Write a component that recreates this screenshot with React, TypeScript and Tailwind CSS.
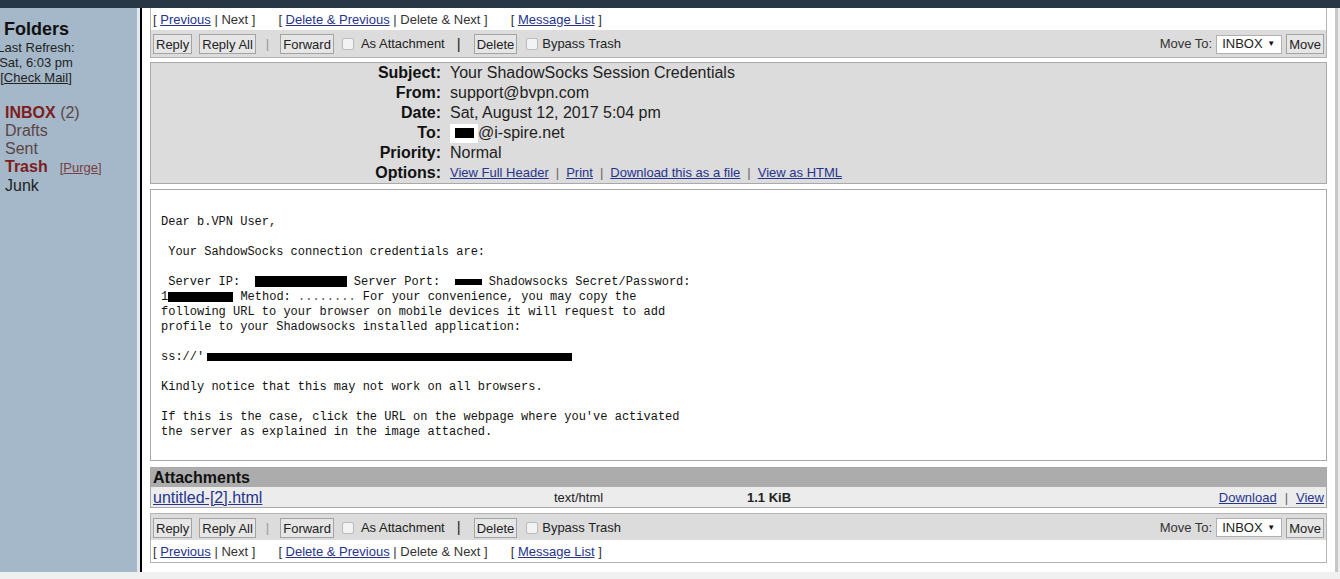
import React from 'react';

const link = 'text-[#26348c] underline';

const Btn: React.FC<{ children: React.ReactNode; className?: string }> = ({ children, className = '' }) => (
  <span
    className={`inline-flex items-center h-[20px] pt-[1px] px-[2px] border border-[#a3a3a3] bg-[#e6e6e6] leading-none text-[13px] text-[#222] ${className}`}
  >
    {children}
  </span>
);

const Check: React.FC<{ className?: string }> = ({ className = '' }) => (
  <span className={`inline-block w-[12px] h-[12px] border border-[#bababa] bg-[#f3f3f3] rounded-[2px] ${className}`} />
);

const NavRow: React.FC<{ className?: string }> = ({ className = '' }) => (
  <div className={`flex items-center gap-[23px] pl-[2px] pt-[1px] text-[13px] text-[#333] ${className}`}>
    <span>
      [ <span className={link}>Previous</span> | Next ]
    </span>
    <span>
      [ <span className={link}>Delete &amp; Previous</span> | Delete &amp; Next ]
    </span>
    <span>
      [ <span className={link}>Message List</span> ]
    </span>
  </div>
);

const Toolbar: React.FC<{ className?: string }> = ({ className = '' }) => (
  <div className={`flex items-center bg-[#dcdcdc] px-[2px] pt-[1px] text-[13px] text-[#222] ${className}`}>
    <Btn>Reply</Btn>
    <Btn className="ml-[7px]">Reply All</Btn>
    <span className="ml-[10px] text-[#9a9a9a]">|</span>
    <Btn className="ml-[11px]">Forward</Btn>
    <Check className="ml-[8px]" />
    <span className="ml-[7px]">As Attachment</span>
    <span className="ml-[12px] text-[15px] text-[#222]">|</span>
    <Btn className="ml-[13px]">Delete</Btn>
    <Check className="ml-[9px]" />
    <span className="ml-[4px]">Bypass Trash</span>
    <div className="ml-auto flex items-center">
      <span className="text-[#333]">Move To:</span>
      <div className="ml-[4px] w-[66px] h-[19px] bg-white border border-[#b0b0b0] flex items-center justify-between pl-[5px] pr-[6px]">
        <span className="text-[13px] text-[#222]">INBOX</span>
        <span className="text-[8px] text-[#111]">▼</span>
      </div>
      <Btn className="ml-[4px]">Move</Btn>
    </div>
  </div>
);

const headers: [string, React.ReactNode][] = [
  ['Subject:', 'Your ShadowSocks Session Credentials'],
  ['From:', 'support@bvpn.com'],
  ['Date:', 'Sat, August 12, 2017 5:04 pm'],
  [
    'To:',
    <span className="flex items-center">
      <span className="flex items-center justify-center w-[28px] h-[19px] bg-white">
        <span className="w-[19px] h-[10px] bg-black" />
      </span>
      <span>@i-spire.net</span>
    </span>,
  ],
  ['Priority:', 'Normal'],
  [
    'Options:',
    <span className="text-[13px]">
      <span className={link}>View Full Header</span>
      <span className="mx-[7px] text-[#666]">|</span>
      <span className={link}>Print</span>
      <span className="mx-[7px] text-[#666]">|</span>
      <span className={link}>Download this as a file</span>
      <span className="mx-[7px] text-[#666]">|</span>
      <span className={link}>View as HTML</span>
    </span>,
  ],
];

const Redact: React.FC<{ w: string; h: string }> = ({ w, h }) => (
  <span className={`inline-block bg-black align-middle ${w} ${h}`} />
);

export default function App() {
  return (
    <div className="w-[1340px] h-[579px] overflow-hidden flex flex-col bg-white font-['Liberation_Sans',Arial,sans-serif]">
      <div className="h-[8px] shrink-0 bg-[#283746]" />

      <div className="flex flex-1 min-h-0">
        {/* folder list */}
        <aside className="w-[137px] shrink-0 bg-[#a4b8c9] pt-[10px] text-[#222]">
          <div className="pl-[4px] text-[18px] font-bold leading-[22px] text-[#111]">Folders</div>
          <div className="w-[72px] flex flex-col items-center text-[13px] leading-[15px] whitespace-nowrap">
            <span>Last Refresh:</span>
            <span>Sat, 6:03 pm</span>
            <span>
              [<span className="underline">Check Mail</span>]
            </span>
          </div>
          <div className="mt-[19px] pl-[5px] text-[16px] leading-[18px]">
            <div>
              <span className="font-bold text-[#7d1d1d]">INBOX</span>{' '}
              <span className="text-[#5c4444]">(2)</span>
            </div>
            <div className="text-[#5c4444]">Drafts</div>
            <div className="text-[#5c4444]">Sent</div>
            <div className="flex items-baseline">
              <span className="font-bold text-[#7d1d1d]">Trash</span>
              <span className="ml-[12px] text-[13px] text-[#7a4040]">
                [<span className="underline">Purge</span>]
              </span>
            </div>
            <div className="text-[#222]">Junk</div>
          </div>
        </aside>
        <div className="w-[3px] shrink-0 bg-[#e3e8ec]" />
        <div className="w-[2px] shrink-0 bg-black" />

        <main className="flex-1 flex flex-col px-[8px]">
          {/* top navigation */}
          <div className="border-x border-b border-[#b4b4b4]">
            <NavRow className="h-[22px]" />
            <Toolbar className="h-[27px]" />
          </div>

          {/* message headers */}
          <div className="mt-[4px] border border-[#a9a9a9] bg-[#dcdcdc] grid grid-cols-[293px_1fr] text-[16px] leading-[20px] text-[#222]">
            {headers.map(([label, value]) => (
              <React.Fragment key={label}>
                <div className="h-[20px] text-right pr-[3px] font-bold text-[#111]">{label}</div>
                <div className="h-[20px] pl-[6px] flex items-center">{value}</div>
              </React.Fragment>
            ))}
          </div>

          {/* message body */}
          <div className="mt-[5px] h-[272px] border border-[#a9a9a9] bg-white pt-[10px] pl-[10px]">
            <pre className="font-['Liberation_Mono','DejaVu_Sans_Mono',monospace] text-[12px] leading-[15px] text-[#111]">
              {'\n'}
              {'Dear b.VPN User,\n'}
              {'\n'}
              {' Your SahdowSocks connection credentials are:\n'}
              {'\n'}
              {' Server IP:  '}
              <Redact w="w-[92px]" h="h-[11px]" />
              {' Server Port:  '}
              <Redact w="w-[27px]" h="h-[6px]" />
              {' Shadowsocks Secret/Password:\n'}
              {'1'}
              <Redact w="w-[65px]" h="h-[10px]" />
              {' Method: '}
              <span className="text-[#555]">........</span>
              {' For your convenience, you may copy the\n'}
              {'following URL to your browser on mobile devices it will request to add\n'}
              {'profile to your Shadowsocks installed application:\n'}
              {'\n'}
              {"ss://'"}
              <Redact w="w-[365px] ml-[3px]" h="h-[8px]" />
              {'\n'}
              {'\n'}
              {'Kindly notice that this may not work on all browsers.\n'}
              {'\n'}
              {"If this is the case, click the URL on the webpage where you've activated\n"}
              {'the server as explained in the image attached.\n'}
            </pre>
          </div>

          {/* attachments */}
          <div className="mt-[6px] border border-[#a9a9a9]">
            <div className="h-[19px] bg-[#acacac] pl-[2px] pt-[1px] flex items-center text-[16px] font-bold text-[#111]">
              Attachments
            </div>
            <div className="h-[20px] bg-[#ececec] pl-[2px] pr-[2px] pt-[1px] flex items-center text-[13px] text-[#222]">
              <span className={`w-[401px] text-[16px] ${link}`}>untitled-[2].html</span>
              <span className="w-[193px]">text/html</span>
              <span className="font-bold">1.1 KiB</span>
              <span className="ml-auto">
                <span className={link}>Download</span>
                <span className="mx-[8px] text-[#666]">|</span>
                <span className={link}>View</span>
              </span>
            </div>
          </div>

          {/* bottom navigation */}
          <div className="mt-[5px] border border-[#b4b4b4]">
            <Toolbar className="h-[26px]" />
            <NavRow className="h-[22px]" />
          </div>
        </main>

        <div className="w-[5px] shrink-0 flex">
          <div className="w-[3px] bg-[#c6c6c6]" />
          <div className="w-[2px] bg-[#ededed]" />
        </div>
      </div>

      <div className="h-[7px] shrink-0 bg-[#f0f0f0]" />
    </div>
  );
}
